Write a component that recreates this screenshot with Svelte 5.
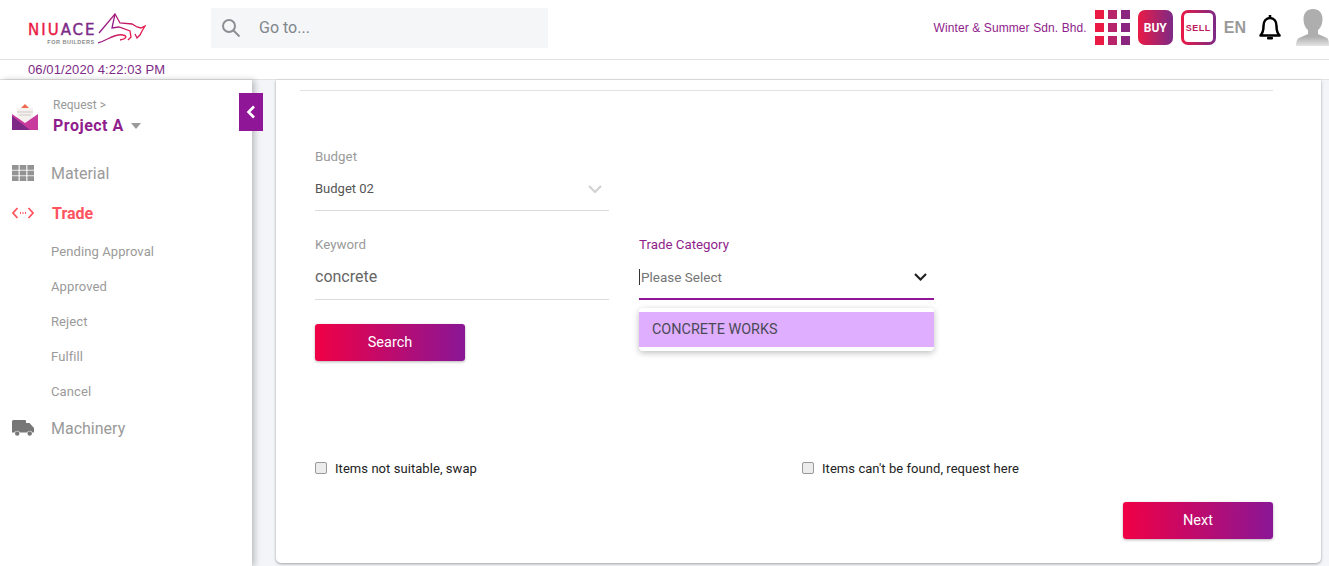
<script>
	const subItems = ['Pending Approval', 'Approved', 'Reject', 'Fulfill', 'Cancel'];
	const gridColors = ['#ea1a45', '#b8246a', '#8a2580', '#ea1a45', '#b8246a', '#8a2580', '#ea1a45', '#b8246a', '#8a2580'];
</script>

<header class="topbar">
	<div class="logo">
		<div class="logo-words">
			<span class="logo-name"><span class="red">NIU</span>ACE</span>
			<span class="logo-sub">FOR BUILDERS</span>
		</div>
		<svg class="logo-bull" width="48" height="31" viewBox="0 0 48 31" fill="none" stroke-width="1.300">
			<defs>
				<linearGradient id="bull" x1="0" x2="1" y1="0" y2="0">
					<stop offset="0" stop-color="#8f1d8c" />
					<stop offset="1" stop-color="#e8194a" />
				</linearGradient>
			</defs>
			<path d="M1 20L17 1L22 10L34 11L39 14L43 15L47 13L44 18L42 22L39 25L37 21" stroke="url(#bull)" />
			<path d="M17 1L14 15L21 14L32 18L33 24L30 27" stroke="url(#bull)" />
			<path d="M0 30C10 27 17 20 25 22C30 23 28 26 22 27" stroke="url(#bull)" />
		</svg>
	</div>
	<div class="search">
		<svg width="20" height="20" viewBox="0 0 20 20" fill="none" stroke="#8b8f94" stroke-width="2">
			<circle cx="8" cy="8" r="6" />
			<path d="M12.500 12.500L18.500 18.500" />
		</svg>
		<span>Go to...</span>
	</div>
	<div class="top-right">
		<span class="company">Winter &amp; Summer Sdn. Bhd.</span>
		<div class="app-grid">
			{#each gridColors as color}
				<i style="background: {color}"></i>
			{/each}
		</div>
		<div class="buy">BUY</div>
		<div class="sell"><span>SELL</span></div>
		<span class="lang">EN</span>
		<svg class="bell" width="24" height="27" viewBox="0 0 24 27" fill="none" stroke="#000" stroke-width="2.500">
			<path d="M2.500 21.500C5 19 5.500 17 5.500 12C5.500 7.500 8 4 12 4C16 4 18.500 7.500 18.500 12C18.500 17 19 19 21.500 21.500Z" stroke-linejoin="round" />
			<path d="M12 1v3" />
			<path d="M9.500 23.500h5v1.500h-5z" fill="#000" stroke-width="1" />
		</svg>
		<svg class="avatar" width="33" height="37" viewBox="0 0 33 37">
			<defs>
				<linearGradient id="fade" x1="0" x2="0" y1="0" y2="1">
					<stop offset="0.75" stop-color="#aeaeae" />
					<stop offset="1" stop-color="#e4e4e4" />
				</linearGradient>
			</defs>
			<path d="M17 0c6 0 9.500 4 9.500 10c0 5-2 9-4.500 11v4l9 4c1.500 1 2 4 2 8H0c0-4 1-7 3-8l9-4v-4c-2.500-2-4.500-6-4.500-11C7.500 4 11 0 17 0z" fill="url(#fade)" />
		</svg>
	</div>
</header>

<div class="datebar">06/01/2020 4:22:03 PM</div>

<div class="body">
	<aside class="sidebar">
		<div class="project">
			<svg width="26" height="26" viewBox="0 0 26 26">
				<path d="M13 0L18 5H8z" fill="#ee6a50" />
				<rect x="5" y="4" width="16" height="14" fill="#f4f1ee" />
				<path d="M5 8h16M7 11h12" stroke="#cfcac6" stroke-width="1" />
				<path d="M0 10L13 19L26 10V26H0z" fill="#c83a9c" />
				<path d="M0 12L18 26H0z" fill="#7d2a86" />
			</svg>
			<div class="project-text">
				<span class="crumb">Request &gt;</span>
				<span class="project-name">Project A <i class="caret"></i></span>
			</div>
		</div>

		<nav>
			<div class="nav-item">
				<svg width="22" height="16" viewBox="0 0 22 16" fill="#939393">
					<rect width="6.600" height="4.800" /><rect x="7.700" width="6.600" height="4.800" /><rect x="15.400" width="6.600" height="4.800" />
					<rect y="5.600" width="6.600" height="4.800" /><rect x="7.700" y="5.600" width="6.600" height="4.800" /><rect x="15.400" y="5.600" width="6.600" height="4.800" />
					<rect y="11.200" width="6.600" height="4.800" /><rect x="7.700" y="11.200" width="6.600" height="4.800" /><rect x="15.400" y="11.200" width="6.600" height="4.800" />
				</svg>
				<span>Material</span>
			</div>
			<div class="nav-item active">
				<svg width="22" height="12" viewBox="0 0 22 12" fill="none" stroke="#ff5360" stroke-width="1.800">
					<path d="M5.500 1L1 6l4.500 5M16.500 1L21 6l-4.500 5" />
					<path d="M8 6h1M10.500 6h1M13 6h1" stroke-width="2" />
				</svg>
				<span>Trade</span>
			</div>
			<ul class="sub">
				{#each subItems as item}
					<li>{item}</li>
				{/each}
			</ul>
			<div class="nav-item">
				<svg width="22" height="16" viewBox="0 0 22 16" fill="#777">
					<path d="M1.500 0H13a1 1 0 0 1 1 1v2h3.500L22 8v4.500h-1.500a3 3 0 0 0-5.500 0H8a3 3 0 0 0-5.500 0H0V1.500A1.500 1.500 0 0 1 1.500 0z" />
					<circle cx="5.200" cy="13.500" r="2.200" />
					<circle cx="17.700" cy="13.500" r="2.200" />
				</svg>
				<span>Machinery</span>
			</div>
		</nav>
	</aside>

	<button class="collapse" aria-label="Collapse">
		<svg width="10" height="14" viewBox="0 0 10 14" fill="none" stroke="#fff" stroke-width="2.600">
			<path d="M8 1.500L2.500 7L8 12.500" />
		</svg>
	</button>

	<main class="content">
		<section class="card">
			<hr />
			<div class="form">
				<div class="field budget">
					<span class="label">Budget</span>
					<div class="select-value">
						<span>Budget 02</span>
						<svg width="14" height="8" viewBox="0 0 14 8" fill="none" stroke="#d0d0d0" stroke-width="2"><path d="M1 1l6 6 6-6" /></svg>
					</div>
				</div>
				<div class="row">
					<div class="field">
						<span class="label">Keyword</span>
						<div class="keyword">concrete</div>
					</div>
					<div class="field trade">
						<span class="label purple">Trade Category</span>
						<div class="select-open">
							<span class="cursor"></span>
							<span>Please Select</span>
							<svg width="13" height="8" viewBox="0 0 13 8" fill="none" stroke="#222" stroke-width="2.200"><path d="M1 1l5.500 5.500L12 1" /></svg>
						</div>
						<div class="dropdown"><div class="option">CONCRETE WORKS</div></div>
					</div>
				</div>
				<button class="btn">Search</button>
				<div class="checks">
					<label><input type="checkbox" /> Items not suitable, swap</label>
					<label><input type="checkbox" /> Items can't be found, request here</label>
				</div>
				<div class="actions"><button class="btn">Next</button></div>
			</div>
		</section>
	</main>
</div>

<style>
	:global(body) {
		margin: 0;
		height: 566px;
		overflow: hidden;
		background: #f4f5f9;
		font-family: Roboto, 'Liberation Sans', sans-serif;
	}

	.topbar {
		display: flex;
		align-items: center;
		height: 55px;
		padding-bottom: 4px;
		background: #fff;
		border-bottom: 1px solid #e2e2e2;
		box-sizing: content-box;
	}

	.logo {
		display: flex;
		align-items: flex-start;
		align-self: stretch;
		width: 211px;
		padding-left: 28px;
		box-sizing: border-box;
	}

	.logo-words {
		display: flex;
		flex-direction: column;
		align-items: flex-end;
		margin-top: 22px;
	}

	.logo-name {
		font-family: 'DejaVu Sans', sans-serif;
		font-size: 15px;
		line-height: 17px;
		letter-spacing: 2px;
		margin-right: -2px;
		color: #7d2a86;
		-webkit-text-stroke: 0.4px currentColor;
	}

	.red {
		color: #ea1a45;
	}

	.logo-sub {
		font-family: 'Liberation Sans', sans-serif;
		font-size: 5.500px;
		line-height: 6px;
		letter-spacing: 0.5px;
		font-weight: 700;
		color: #8a8a8a;
	}

	.logo-bull {
		margin: 13px 0 0 3px;
	}

	.search {
		display: flex;
		align-items: center;
		gap: 18px;
		width: 337px;
		height: 40px;
		padding-left: 10px;
		box-sizing: border-box;
		background: #f5f6f8;
		color: #80868b;
		font-size: 16px;
	}

	.top-right {
		display: flex;
		align-items: center;
		margin-left: auto;
		height: 100%;
	}

	.company {
		font-family: 'Liberation Sans', sans-serif;
		font-size: 12px;
		letter-spacing: 0.1px;
		color: #8f1d8c;
		margin-right: 8px;
	}

	.app-grid {
		display: grid;
		grid-template-columns: repeat(3, 9px);
		grid-auto-rows: 9px;
		gap: 4px;
	}

	.buy {
		display: flex;
		align-items: center;
		justify-content: center;
		width: 35px;
		height: 35px;
		margin-left: 8px;
		border-radius: 7px;
		background: linear-gradient(90deg, #ea1a45, #7d2a86);
		color: #fff;
		font-size: 12px;
		font-weight: 700;
	}

	.sell {
		width: 35px;
		height: 35px;
		margin-left: 8px;
		padding: 3px;
		box-sizing: border-box;
		border-radius: 7px;
		background: linear-gradient(90deg, #ea1a45, #7d2a86);
	}

	.sell span {
		display: flex;
		align-items: center;
		justify-content: center;
		height: 100%;
		border-radius: 4px;
		background: #fff;
		color: #c0185c;
		font-family: 'Liberation Sans', sans-serif;
		font-size: 9px;
		font-weight: 700;
		letter-spacing: 0.5px;
	}

	.lang {
		margin-left: 8px;
		color: #9a9a9a;
		font-family: 'Liberation Sans', sans-serif;
		font-size: 16px;
		font-weight: 700;
	}

	.bell {
		margin-left: 12px;
	}

	.avatar {
		margin-left: 14px;
	}

	.datebar {
		height: 19px;
		padding-left: 28px;
		background: #fff;
		border-bottom: 1px solid #e2e2e2;
		font-family: 'Liberation Sans', sans-serif;
		font-size: 13px;
		line-height: 19px;
		color: #7d2a86;
		letter-spacing: 0.1px;
	}

	.body {
		position: relative;
		display: flex;
		height: 486px;
	}

	.sidebar {
		flex: none;
		width: 252px;
		background: #fff;
		box-shadow: 3px 0 6px rgba(0, 0, 0, 0.22);
		box-sizing: border-box;
		padding: 12px 0 0 12px;
	}

	.project {
		display: flex;
		align-items: center;
		gap: 15px;
		height: 48px;
	}

	.project svg {
		margin-top: 2px;
	}

	.project-text {
		display: flex;
		flex-direction: column;
	}

	.crumb {
		font-size: 12px;
		line-height: 19px;
		color: #9a9a9a;
	}

	.project-name {
		font-size: 16px;
		line-height: 22px;
		font-weight: 700;
		color: #8f1d8c;
		letter-spacing: 0.5px;
	}

	.caret {
		display: inline-block;
		margin-left: 3px;
		vertical-align: middle;
		border: 5px solid transparent;
		border-top: 6px solid #9a9a9a;
		border-bottom: 0;
	}

	nav {
		margin-top: 13px;
	}

	.nav-item {
		display: flex;
		align-items: center;
		gap: 17px;
		height: 40px;
		color: #9a9a9a;
		font-size: 16px;
	}

	.nav-item svg {
		flex: none;
	}

	.nav-item.active {
		color: #ff5360;
		font-weight: 700;
	}

	.nav-item.active span {
		margin-left: 1px;
	}

	.sub {
		list-style: none;
		margin: 0 0 -1px;
		padding: 1px 0 0 39px;
	}

	.sub li {
		height: 35px;
		font-size: 13px;
		line-height: 35px;
		letter-spacing: 0.1px;
		color: #9a9a9a;
	}

	.collapse {
		position: absolute;
		left: 239px;
		top: 13px;
		width: 24px;
		height: 38px;
		padding: 0;
		border: 0;
		background: #8f1696;
		display: flex;
		align-items: center;
		justify-content: center;
	}

	.content {
		flex: 1;
		padding: 0 8px 3px 24px;
		min-width: 0;
	}

	.card {
		height: 100%;
		background: #fff;
		border-radius: 0 0 5px 5px;
		box-shadow: 0 1px 3px rgba(0, 0, 0, 0.35);
		box-sizing: border-box;
		padding: 10px 48px 0 24px;
	}

	hr {
		margin: 0;
		border: 0;
		border-top: 1px solid #e2e2e2;
	}

	.form {
		padding: 59px 0 0 15px;
	}

	.label {
		display: block;
		font-size: 13.300px;
		line-height: 14px;
		color: #9a9a9a;
	}

	.label.purple {
		color: #8f1d8c;
	}

	.budget {
		width: 294px;
	}

	.select-value {
		display: flex;
		align-items: center;
		justify-content: space-between;
		height: 47px;
		padding-top: 3px;
		padding-right: 7px;
		border-bottom: 1px solid #dcdcdc;
		font-size: 13px;
		color: #555;
		box-sizing: border-box;
	}

	.row {
		display: flex;
		gap: 30px;
		margin-top: 27px;
	}

	.row .field {
		width: 294px;
	}

	.row .trade {
		position: relative;
		width: 295px;
	}

	.keyword {
		height: 48px;
		line-height: 50px;
		box-sizing: border-box;
		border-bottom: 1px solid #dcdcdc;
		font-size: 16px;
		color: #666;
	}

	.select-open {
		display: flex;
		align-items: center;
		height: 48px;
		padding-top: 3px;
		padding-right: 7px;
		box-sizing: border-box;
		border-bottom: 2px solid #8f1696;
		font-size: 13.500px;
		color: #757575;
	}

	.select-open svg {
		margin-left: auto;
	}

	.cursor {
		width: 1px;
		height: 16px;
		margin-right: 1px;
		background: #333;
	}

	.dropdown {
		position: absolute;
		left: 0;
		right: 0;
		top: 70px;
		padding: 4px 0;
		background: #fff;
		border-radius: 4px;
		box-shadow: 0 2px 6px rgba(0, 0, 0, 0.25);
	}

	.option {
		height: 35px;
		padding-left: 13px;
		background: #dfaeff;
		font-size: 14.400px;
		line-height: 35px;
		color: #4a4a55;
	}

	.btn {
		display: block;
		width: 150px;
		height: 37px;
		padding: 0;
		border: 0;
		border-radius: 3px;
		background: linear-gradient(90deg, #f00045, #8a1696);
		box-shadow: 0 1px 3px rgba(0, 0, 0, 0.3);
		color: #fff;
		font-family: Roboto, 'Liberation Sans', sans-serif;
		font-size: 14.500px;
	}

	.form > .btn {
		margin-top: 24px;
	}

	.checks {
		display: flex;
		margin-top: 98px;
	}

	.checks label {
		flex: none;
		display: flex;
		align-items: center;
		width: 487px;
		height: 18px;
		font-size: 13px;
		letter-spacing: 0.06px;
		color: #222;
	}

	.checks label:last-child {
		width: 471px;
	}

	.checks input {
		width: 12px;
		height: 12px;
		margin: 0 8px 0 0;
		appearance: none;
		background: #ececec;
		border: 1px solid #9a9a9a;
		border-radius: 2px;
		box-sizing: border-box;
	}

	.actions {
		display: flex;
		justify-content: flex-end;
		margin-top: 25px;
	}
</style>
